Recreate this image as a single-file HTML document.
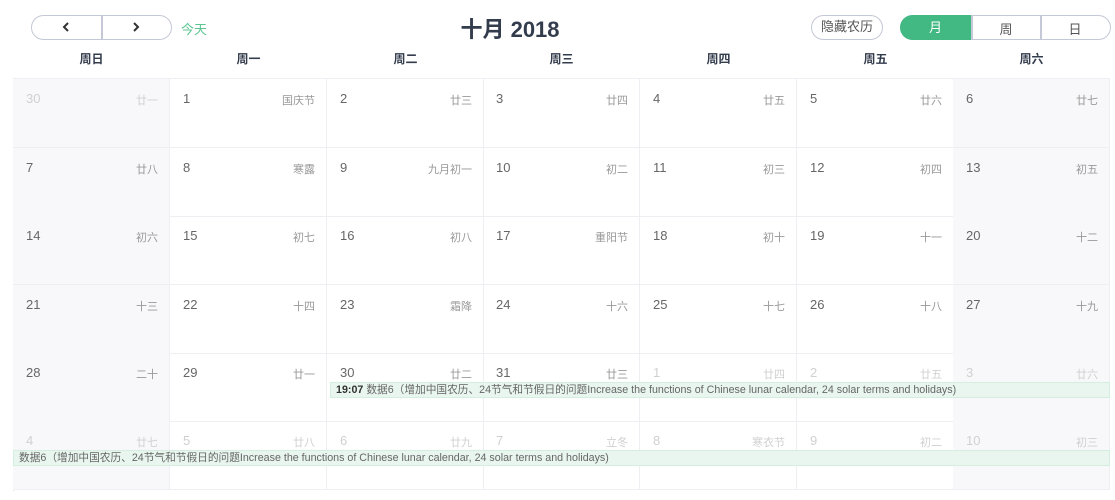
<!DOCTYPE html>
<html><head><meta charset="utf-8"><style>
body{margin:0;width:1115px;height:500px;background:#fff;font-family:"Liberation Sans","Noto Sans CJK SC",sans-serif;position:relative;overflow:hidden}
.a{position:absolute}
.btn{position:absolute;border:1.5px solid #c5c8d6;box-sizing:border-box;border-radius:13px;height:25px;top:15px;font-size:13px;color:#555;text-align:center;line-height:22px}
.wd{position:absolute;top:50px;width:157px;text-align:center;font-size:12px;font-weight:bold;color:#333c4d}
.c{position:absolute;width:157px;height:69px;box-sizing:border-box;border-right:1px solid #efeff3;border-bottom:1px solid #efeff3}
.c.g{background:#f8f8fa}
.n{position:absolute;left:13px;top:12px;font-size:13px;color:#666}
.l{position:absolute;right:11px;top:13px;font-size:11px;color:#999}
.o .n,.o .l{color:#d0d0d0}
.ev{position:absolute;height:16px;background:#e9f6ef;border:1px solid #d4eedf;box-sizing:border-box;font-size:10.7px;color:#666;line-height:14px;padding-left:5px;white-space:nowrap;overflow:hidden}
</style></head><body>
<div class="btn" style="left:31px;width:141px"></div>
<div class="a" style="left:101px;top:15px;width:1.5px;height:25px;background:#c5c8d6"></div>
<svg class="a" style="left:61px;top:21px" width="10" height="12"><path d="M7 2 L3 6 L7 10" stroke="#333" stroke-width="2" fill="none"/></svg>
<svg class="a" style="left:131px;top:21px" width="10" height="12"><path d="M3 2 L7 6 L3 10" stroke="#333" stroke-width="2" fill="none"/></svg>
<div class="a" style="left:181px;top:19px;font-size:13px;color:#5cc592">今天</div>
<div class="a" style="left:410px;top:12px;width:200px;text-align:center;font-size:22px;font-weight:bold;color:#333c4d">十月 2018</div>
<div class="btn" style="left:811px;width:72px">隐藏农历</div>
<div class="btn" style="left:900px;width:211px"></div>
<div class="a" style="left:900px;top:15px;width:71px;height:25px;background:#42b983;border-radius:13px 0 0 13px;color:#fff;font-size:13px;text-align:center;line-height:25px">月</div>
<div class="a" style="left:971px;top:15px;width:1.5px;height:25px;background:#c5c8d6"></div>
<div class="a" style="left:1040px;top:15px;width:1.5px;height:25px;background:#c5c8d6"></div>
<div class="a" style="left:972px;top:19px;width:68px;text-align:center;font-size:13px;color:#555">周</div>
<div class="a" style="left:1041px;top:19px;width:68px;text-align:center;font-size:13px;color:#555">日</div>

<div class="wd" style="left:13px">周日</div><div class="wd" style="left:170px">周一</div><div class="wd" style="left:327px">周二</div><div class="wd" style="left:483px">周三</div><div class="wd" style="left:640px">周四</div><div class="wd" style="left:797px">周五</div><div class="wd" style="left:953px">周六</div>
<div class="a" style="left:13px;top:78px;width:1097px;height:1px;background:#efeff3"></div>
<div class="a" style="left:13px;top:78px;width:1px;height:414px;background:#efeff3"></div>

<div class="c g o" style="left:13px;top:79px"><span class="n">30</span><span class="l">廿一</span></div>
<div class="c" style="left:170px;top:79px"><span class="n">1</span><span class="l">国庆节</span></div>
<div class="c" style="left:327px;top:79px"><span class="n">2</span><span class="l">廿三</span></div>
<div class="c" style="left:483px;top:79px"><span class="n">3</span><span class="l">廿四</span></div>
<div class="c" style="left:640px;top:79px"><span class="n">4</span><span class="l">廿五</span></div>
<div class="c" style="left:797px;top:79px"><span class="n">5</span><span class="l">廿六</span></div>
<div class="c g" style="left:953px;top:79px"><span class="n">6</span><span class="l">廿七</span></div>

<div class="c g" style="left:13px;top:148px"><span class="n">7</span><span class="l">廿八</span></div>
<div class="c" style="left:170px;top:148px"><span class="n">8</span><span class="l">寒露</span></div>
<div class="c" style="left:327px;top:148px"><span class="n">9</span><span class="l">九月初一</span></div>
<div class="c" style="left:483px;top:148px"><span class="n">10</span><span class="l">初二</span></div>
<div class="c" style="left:640px;top:148px"><span class="n">11</span><span class="l">初三</span></div>
<div class="c" style="left:797px;top:148px"><span class="n">12</span><span class="l">初四</span></div>
<div class="c g" style="left:953px;top:148px"><span class="n">13</span><span class="l">初五</span></div>

<div class="c g" style="left:13px;top:216px"><span class="n">14</span><span class="l">初六</span></div>
<div class="c" style="left:170px;top:216px"><span class="n">15</span><span class="l">初七</span></div>
<div class="c" style="left:327px;top:216px"><span class="n">16</span><span class="l">初八</span></div>
<div class="c" style="left:483px;top:216px"><span class="n">17</span><span class="l">重阳节</span></div>
<div class="c" style="left:640px;top:216px"><span class="n">18</span><span class="l">初十</span></div>
<div class="c" style="left:797px;top:216px"><span class="n">19</span><span class="l">十一</span></div>
<div class="c g" style="left:953px;top:216px"><span class="n">20</span><span class="l">十二</span></div>

<div class="c g" style="left:13px;top:285px"><span class="n">21</span><span class="l">十三</span></div>
<div class="c" style="left:170px;top:285px"><span class="n">22</span><span class="l">十四</span></div>
<div class="c" style="left:327px;top:285px"><span class="n">23</span><span class="l">霜降</span></div>
<div class="c" style="left:483px;top:285px"><span class="n">24</span><span class="l">十六</span></div>
<div class="c" style="left:640px;top:285px"><span class="n">25</span><span class="l">十七</span></div>
<div class="c" style="left:797px;top:285px"><span class="n">26</span><span class="l">十八</span></div>
<div class="c g" style="left:953px;top:285px"><span class="n">27</span><span class="l">十九</span></div>

<div class="c g" style="left:13px;top:353px"><span class="n">28</span><span class="l">二十</span></div>
<div class="c" style="left:170px;top:353px"><span class="n">29</span><span class="l">廿一</span></div>
<div class="c" style="left:327px;top:353px"><span class="n">30</span><span class="l">廿二</span></div>
<div class="c" style="left:483px;top:353px"><span class="n">31</span><span class="l">廿三</span></div>
<div class="c o" style="left:640px;top:353px"><span class="n">1</span><span class="l">廿四</span></div>
<div class="c o" style="left:797px;top:353px"><span class="n">2</span><span class="l">廿五</span></div>
<div class="c g o" style="left:953px;top:353px"><span class="n">3</span><span class="l">廿六</span></div>

<div class="c g o" style="left:13px;top:421px"><span class="n">4</span><span class="l">廿七</span></div>
<div class="c o" style="left:170px;top:421px"><span class="n">5</span><span class="l">廿八</span></div>
<div class="c o" style="left:327px;top:421px"><span class="n">6</span><span class="l">廿九</span></div>
<div class="c o" style="left:483px;top:421px"><span class="n">7</span><span class="l">立冬</span></div>
<div class="c o" style="left:640px;top:421px"><span class="n">8</span><span class="l">寒衣节</span></div>
<div class="c o" style="left:797px;top:421px"><span class="n">9</span><span class="l">初二</span></div>
<div class="c g o" style="left:953px;top:421px"><span class="n">10</span><span class="l">初三</span></div>

<div class="ev" style="left:330px;top:382px;width:780px"><b style="color:#333">19:07</b> 数据6（增加中国农历、24节气和节假日的问题Increase the functions of Chinese lunar calendar, 24 solar terms and holidays)</div>
<div class="ev" style="left:13px;top:450px;width:1097px">数据6（增加中国农历、24节气和节假日的问题Increase the functions of Chinese lunar calendar, 24 solar terms and holidays)</div>
</body></html>
